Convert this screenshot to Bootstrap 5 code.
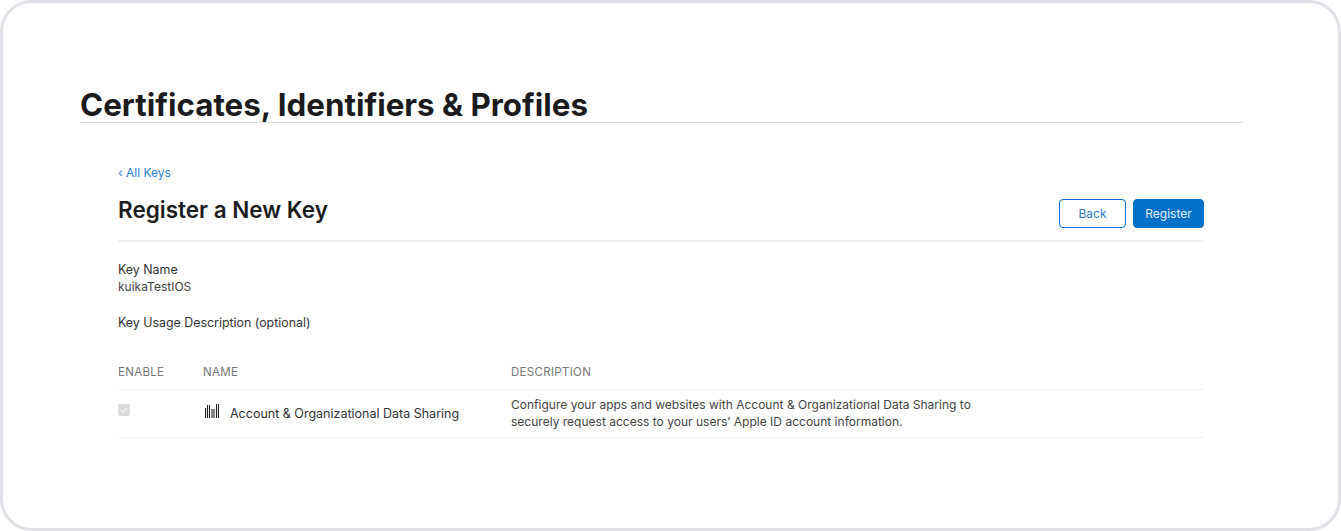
<!DOCTYPE html>
<html lang="en">
<head>
  <meta charset="UTF-8" />
  <meta name="viewport" content="width=device-width, initial-scale=1.0"/>
  <title>Certificates, Identifiers &amp; Profiles</title>
  <link href="https://cdn.jsdelivr.net/npm/bootstrap@5.3.2/dist/css/bootstrap.min.css" rel="stylesheet" />
  <style>
    html, body { height: 100%; }
    body { font-family: Inter, "Liberation Sans", sans-serif; background: #fff; color: #333; overflow: hidden; }
    .frame { width: 1341px; height: 531px; border: 3px solid #dfe1e6; border-radius: 32px; padding: 84px 95px 0 77px; }
    .page-title { font-size: 31.35px; line-height: 36px; font-weight: 700; color: #1b1b1d; margin: 0; border-bottom: 1px solid #dcdcdc; height: 36px; white-space: nowrap; }
    .key-panel { padding: 43px 39px 0 38px; }
    .back-link { font-size: 12px; line-height: 14px; color: #2f7fd3; text-decoration: none; display: block; }
    .head-row { height: 55px; margin-top: 7px; border-bottom: 2px solid #f0f0f0; }
    .key-title { font-size: 22.5px; line-height: 26px; font-weight: 600; color: #1d1d1f; margin: 10px 0 0; }
    .head-actions { gap: 7px; }
    .btn-back, .btn-register { font-size: 12px; line-height: 14px; border-radius: 4px; width: 67px; height: 29px; padding: 0; margin-top: 12px; }
    .btn-back { background: #fff; color: #2f7bc9; border: 1px solid #0870d0; }
    .btn-back:hover { background: #fff; color: #2f7bc9; border-color: #0870d0; }
    .btn-register { background: #0070c9; color: #e4eef8; border: 1px solid #0070c9; width: 71px; }
    .btn-register:hover { background: #0070c9; color: #e4eef8; border-color: #0070c9; }
    .field-block { margin-top: 19px; }
    .field-label, .field-value { font-size: 12.4px; line-height: 17px; color: #333; }
    .field-value { color: #444; font-size: 12px; }
    .key-usage { margin-top: 19px; }
    .key-table { margin: 34px 0 0; width: 100%; }
    .key-table th { font-size: 11.5px; line-height: 14px; font-weight: 400; color: #777; letter-spacing: .3px; padding: 0 0 10px; border-bottom: 1px solid #f0f0f0; }
    .key-table td { font-size: 12px; line-height: 17px; color: #333; padding: 6px 0; height: 48px; border-bottom: 1px solid #f0f0f0; vertical-align: middle; }
    .col-enable { width: 85px; }
    .col-name { width: 308px; }
    .fake-check { width: 12px; height: 12px; background: #dcdcdc; border-radius: 2px; display: block; margin-top: -8px; }
    .service-name { gap: 11px; font-size: 12.5px; }
    .service-icon { margin-top: -5px; margin-left: 2px; }
    .key-table td.desc-text { color: #444; padding: 5px 0 7px; letter-spacing: .01px; }
  </style>
</head>
<body>
  <div class="frame">
    <h1 class="page-title">Certificates, Identifiers &amp; Profiles</h1>

    <div class="key-panel">
      <a class="back-link" href="#">‹ All Keys</a>

      <div class="head-row d-flex justify-content-between align-items-start">
        <h2 class="key-title">Register a New Key</h2>
        <div class="head-actions d-flex">
          <button type="button" class="btn btn-back">Back</button>
          <button type="button" class="btn btn-register">Register</button>
        </div>
      </div>

      <div class="field-block">
        <div class="field-label">Key Name</div>
        <div class="field-value">kuikaTestIOS</div>
        <div class="field-label key-usage">Key Usage Description (optional)</div>
      </div>

      <table class="key-table">
        <thead>
          <tr>
            <th class="col-enable">ENABLE</th>
            <th class="col-name">NAME</th>
            <th>DESCRIPTION</th>
          </tr>
        </thead>
        <tbody>
          <tr>
            <td>
              <span class="fake-check">
                <svg width="12" height="12" viewBox="0 0 12 12" class="d-block"><path d="M3 6.2l2.100 2.200L9 3.800" fill="none" stroke="#f2f2f2" stroke-width="1.4"/></svg>
              </span>
            </td>
            <td>
              <div class="service-name d-flex align-items-center">
                <svg class="service-icon" width="14" height="14" viewBox="0 0 14 14"><path d="M.5 4v10M2.500 1v13M4.500 1v13M7 5v9M9 5v9M11.500 0v14M13.500 0v14" fill="none" stroke="#222" stroke-width="1.1"/></svg>
                <span>Account &amp; Organizational Data Sharing</span>
              </div>
            </td>
            <td class="desc-text">Configure your apps and websites with Account &amp; Organizational Data Sharing to<br>securely request access to your users’ Apple ID account information.</td>
          </tr>
        </tbody>
      </table>
    </div>
  </div>

  <script src="https://cdn.jsdelivr.net/npm/bootstrap@5.3.2/dist/js/bootstrap.bundle.min.js"></script>
</body>
</html>
